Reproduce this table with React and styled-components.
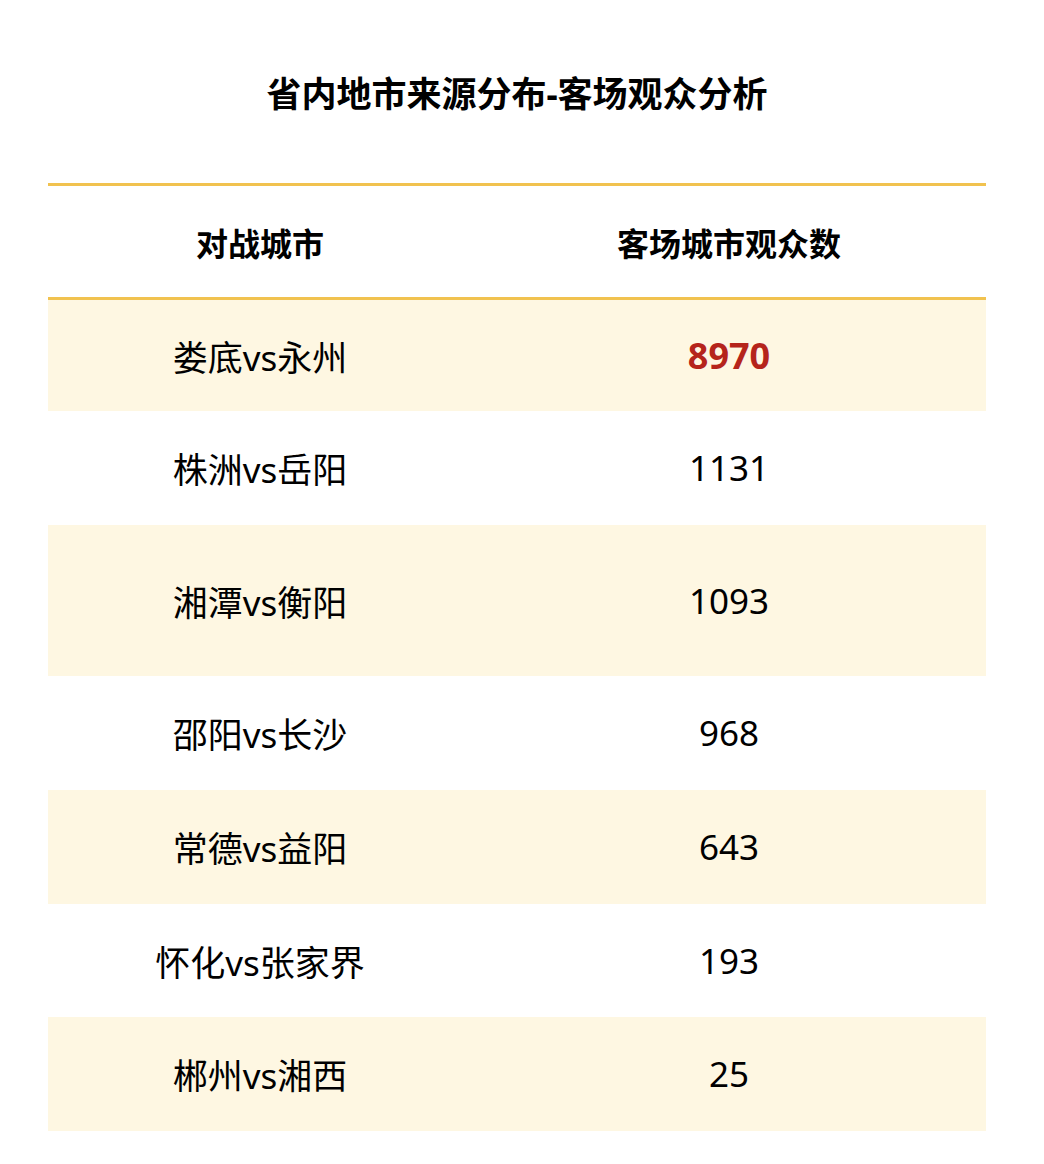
import React from "react";
import styled, { createGlobalStyle } from "styled-components";

const rows = [
  { match: "娄底vs永州", count: "8970", top: true, height: 112 },
  { match: "株洲vs岳阳", count: "1131", height: 114 },
  { match: "湘潭vs衡阳", count: "1093", height: 151 },
  { match: "邵阳vs长沙", count: "968", height: 114 },
  { match: "常德vs益阳", count: "643", height: 114 },
  { match: "怀化vs张家界", count: "193", height: 113 },
  { match: "郴州vs湘西", count: "25", height: 114 },
];

function App() {
  return (
    <Page>
      <GlobalStyle />
      <Title>省内地市来源分布-客场观众分析</Title>
      <Table>
        <colgroup>
          <col style={{ width: "424px" }} />
          <col />
        </colgroup>
        <thead>
          <tr>
            <HeadCell>对战城市</HeadCell>
            <HeadCell>客场城市观众数</HeadCell>
          </tr>
        </thead>
        <tbody>
          {rows.map((row, i) => (
            <Row key={row.match} $shaded={i % 2 === 0} $height={row.height}>
              <Cell>{row.match}</Cell>
              <Cell $highlight={row.top}>{row.count}</Cell>
            </Row>
          ))}
        </tbody>
      </Table>
    </Page>
  );
}

const GlobalStyle = createGlobalStyle`
  body {
    margin: 0;
    background: #fff;
    font-family: "Noto Sans", "Noto Sans CJK SC", sans-serif;
    color: #000;
  }
`;

const Page = styled.div`
  width: 938px;
  margin-left: 48px;
  padding-top: 70px;
  padding-bottom: 30px;
`;

const Title = styled.h1`
  margin: 0 0 65px;
  font-size: 35px;
  font-weight: 700;
  line-height: 48px;
  text-align: center;
`;

const Table = styled.table`
  width: 100%;
  border-collapse: collapse;
  table-layout: fixed;
`;

const HeadCell = styled.th`
  height: 111px;
  padding: 0;
  border-top: 3px solid #f1c24f;
  border-bottom: 3px solid #f1c24f;
  font-size: 32px;
  font-weight: 700;
  text-align: center;
  vertical-align: middle;
`;

const Row = styled.tr`
  height: ${props => props.$height}px;
  background: ${props => (props.$shaded ? "#fef7e2" : "#fff")};
`;

const Cell = styled.td`
  padding: 0;
  text-align: center;
  vertical-align: middle;
  font-size: ${props => (props.$highlight ? "36px" : "35px")};
  font-weight: ${props => (props.$highlight ? 700 : 400)};
  color: ${props => (props.$highlight ? "#b5241b" : "#000")};
`;

export default App;
